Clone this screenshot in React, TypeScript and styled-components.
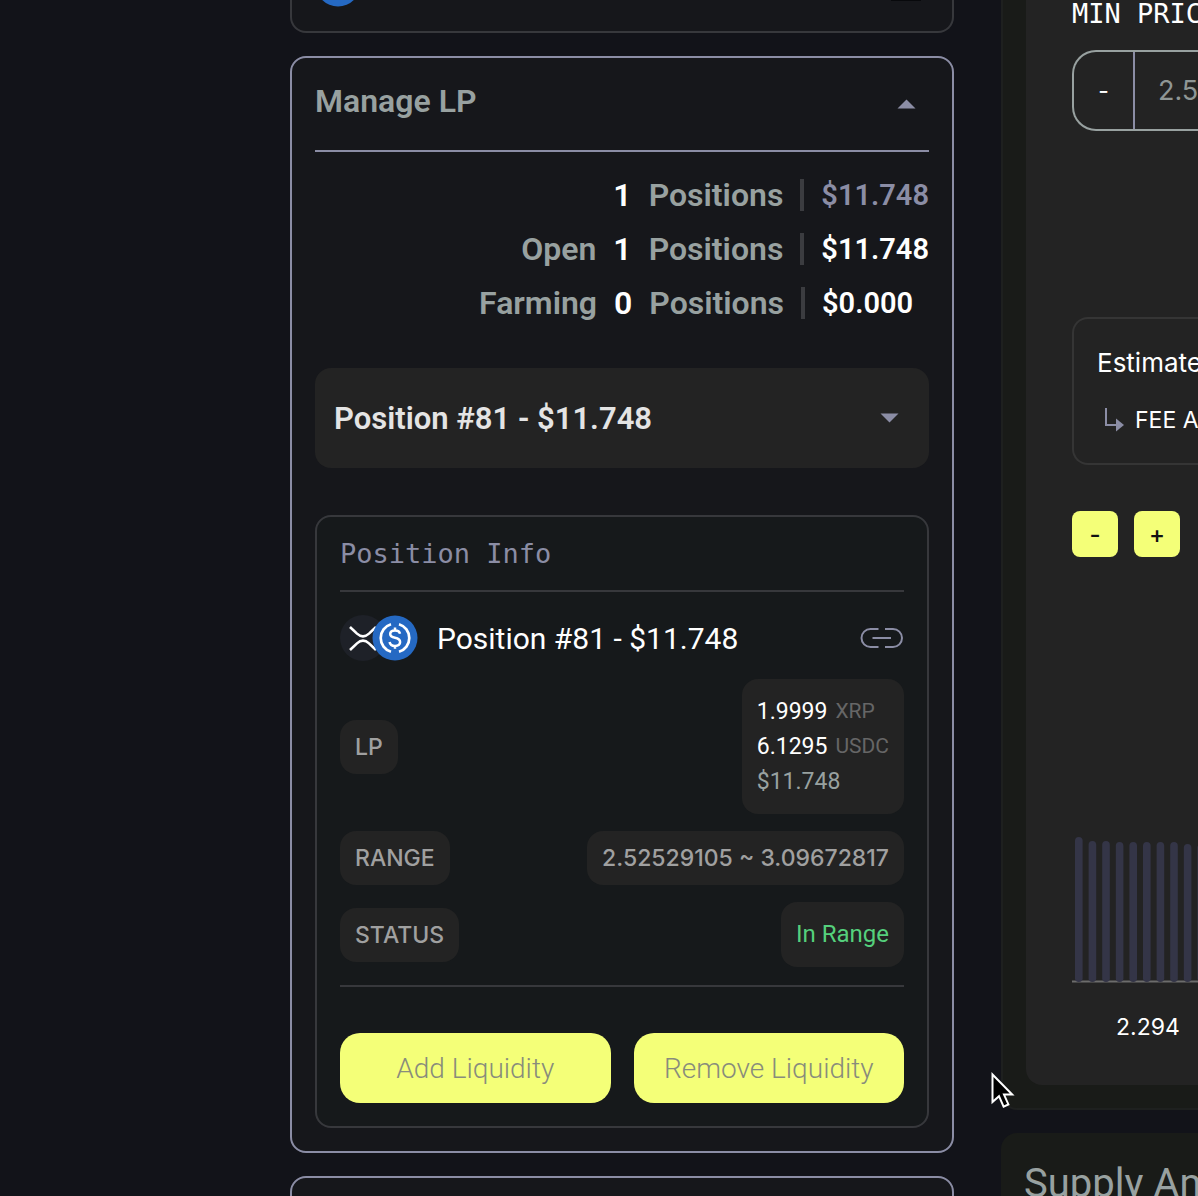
import React from "react";
import styled, { createGlobalStyle } from "styled-components";

const c = {
  page: "#121319",
  card: "#16171b",
  info: "#16191b",
  chip: "#232323",
  line: "#37383c",
  lilac: "#8b8da5",
  sage: "#98a1a0",
  lime: "#f4ff78",
};
const text = `Roboto, "Liberation Sans", sans-serif`;
const plain = `Inter, "Liberation Sans", sans-serif`;
const mono = `"DejaVu Sans Mono", "Liberation Mono", monospace`;

const GlobalStyle = createGlobalStyle`
  *, *::before, *::after { box-sizing: border-box; }
  body { margin: 0; background: ${c.page}; color: #fff; font-family: ${text}; }
  button, input, select { font: inherit; margin: 0; }
  h2, h3, p, ul, dl, dd { margin: 0; padding: 0; }
`;

const Page = styled.div`
  height: 100vh;
  overflow: hidden;
  padding-left: 290px;
  display: grid;
  grid-template-columns: minmax(0, 664fr) minmax(0, 197fr);
  column-gap: 47px;
  align-items: start;
`;

const Column = styled.main`
  display: flex;
  flex-direction: column;
  gap: 23px;
`;

const Card = styled.section<{ $quiet?: boolean }>`
  background: ${c.card};
  border: 2px solid ${(p) => (p.$quiet ? c.line : c.lilac)};
  border-radius: 16px;
  padding: 23px;
`;

const PreviousCard = styled(Card)`
  display: flex;
  justify-content: space-between;
  align-items: flex-start;
  border-top: 0;
  border-radius: 0 0 16px 16px;
  padding: 0 31px 24px 23px;
`;

const Dash = styled.span`
  width: 30px;
  height: 1px;
  background: #08090c;
`;

const CardHead = styled.header`
  display: flex;
  align-items: center;
  justify-content: space-between;
  padding-bottom: 29px;
  border-bottom: 2px solid ${c.lilac};
`;

const CardTitle = styled.h2`
  font-size: 32px;
  line-height: 40px;
  font-weight: 600;
  color: ${c.sage};
`;

const Toggle = styled.button`
  display: flex;
  padding: 18px 13px 12px;
  border: 0;
  background: none;
  color: ${c.lilac};
`;

const Stats = styled.ul`
  list-style: none;
  margin: 16px 0 38px;
`;

const Stat = styled.li`
  display: flex;
  align-items: center;
  justify-content: flex-end;
  gap: 17px;
  height: 54px;
  font-size: 32px;
  font-weight: 600;
  color: ${c.sage};
`;

const Count = styled.span`
  color: #fff;
`;

const Bar = styled.span`
  width: 4px;
  height: 32px;
  background: #3b3c40;
`;

const Amount = styled.span<{ $dim?: boolean }>`
  min-width: 107px;
  font-size: 29px;
  color: ${(p) => (p.$dim ? c.lilac : "#fff")};
`;

const SelectBox = styled.label`
  display: grid;
  align-items: center;
  margin-bottom: 47px;
  color: ${c.lilac};
  & > * { grid-area: 1 / 1; }
  & > svg { justify-self: end; margin-right: 30px; pointer-events: none; }
`;

const Select = styled.select`
  appearance: none;
  width: 100%;
  height: 100px;
  padding: 0 19px;
  border: 0;
  border-radius: 16px;
  background: ${c.chip};
  color: #e4e4e4;
  font-size: 31px;
  font-weight: 600;
`;

const Info = styled.section`
  background: ${c.info};
  border: 2px solid ${c.line};
  border-radius: 16px;
  padding: 23px;
`;

const InfoTitle = styled.h3`
  padding: 0 0 22px;
  border-bottom: 2px solid ${c.line};
  font-family: ${mono};
  font-size: 27px;
  line-height: 28px;
  font-weight: 400;
  color: ${c.lilac};
`;

const Position = styled.div`
  display: flex;
  align-items: center;
  height: 46px;
  margin: 23px 0 18px;
`;

const Tokens = styled.span`
  display: flex;
  & > svg + svg { margin-left: -14px; }
`;

const Name = styled.p`
  flex: 1;
  margin-left: 19px;
  font-size: 30px;
`;

const LinkButton = styled.a`
  display: flex;
  color: ${c.lilac};
`;

const Rows = styled.dl`
  display: flex;
  flex-direction: column;
  gap: 17px;
  padding-bottom: 18px;
  border-bottom: 2px solid ${c.line};
`;

const Row = styled.div`
  display: flex;
  align-items: center;
  justify-content: space-between;
`;

const Chip = styled.dt`
  padding: 15px;
  border-radius: 16px;
  background: ${c.chip};
  color: #a0a0a0;
  font-family: ${plain};
  font-size: 23px;
  line-height: 24px;
  font-weight: 500;
`;

const Value = styled.dd<{ $good?: boolean }>`
  padding: 15px;
  border-radius: 16px;
  background: ${c.chip};
  color: ${(p) => (p.$good ? "#55d07c" : "#fff")};
  font-size: 24px;
  line-height: 35px;
`;

const Holding = styled.p<{ $dim?: boolean }>`
  display: flex;
  gap: 8px;
  font-size: 23px;
  color: ${(p) => (p.$dim ? c.sage : "#fff")};
`;

const Unit = styled.span`
  font-size: 21px;
  color: #666;
`;

const Actions = styled.div`
  display: grid;
  grid-template-columns: 1fr 1fr;
  gap: 23px;
  margin-top: 46px;
`;

const Action = styled.button`
  height: 70px;
  border: 0;
  border-radius: 20px;
  background: ${c.lime};
  color: #888c7c;
  font-size: 28px;
  font-weight: 300;
`;

const NextCard = styled(Card)`
  height: 80px;
`;

const Side = styled.aside`
  display: flex;
  flex-direction: column;
  gap: 23px;
  white-space: nowrap;
`;

const Panel = styled.section`
  border: 2px solid #1e201f;
  border-width: 0 0 2px 2px;
  border-radius: 0 0 0 16px;
  background: #191b18;
  padding: 0 0 23px 23px;
`;

const Inner = styled.div`
  overflow: hidden;
  padding: 0 0 42px 46px;
  border-radius: 0 0 0 16px;
  background: #232323;
`;

const PriceLabel = styled.label`
  display: block;
  padding-bottom: 22px;
  font-family: ${mono};
  font-size: 27px;
  line-height: 28px;
`;

const Stepper = styled.div`
  display: flex;
  height: 81px;
  margin-bottom: 186px;
  border: 2px solid ${c.sage};
  border-right: 0;
  border-radius: 24px 0 0 24px;
`;

const StepButton = styled.button`
  width: 61px;
  flex: none;
  border: 0;
  border-right: 2px solid ${c.lilac};
  background: none;
  color: #fff;
  font-family: ${plain};
  font-size: 23px;
`;

const PriceInput = styled.input`
  min-width: 0;
  flex: 1;
  padding: 0 0 0 23px;
  border: 0;
  background: none;
  color: #8f9695;
  font-family: ${plain};
  font-size: 27px;
`;

const Estimate = styled.div`
  display: flex;
  flex-direction: column;
  gap: 24px;
  padding: 27px 0 27px 23px;
  height: 148px;
  border: 2px solid #353535;
  border-right: 0;
  border-radius: 16px 0 0 16px;
  font-family: ${plain};
  overflow: hidden;
`;

const EstimateTitle = styled.p`
  font-size: 26px;
  line-height: 34px;
`;

const Fee = styled.p`
  display: flex;
  align-items: center;
  gap: 10px;
  padding-left: 7px;
  font-size: 23px;
  line-height: 32px;
  & > svg { flex: none; }
`;

const Zoom = styled.div`
  display: flex;
  gap: 16px;
  margin: 46px 0 279px;
`;

const ZoomButton = styled.button`
  width: 46px;
  height: 46px;
  flex: none;
  padding: 0;
  border: 0;
  border-radius: 8px;
  background: ${c.lime};
  color: #111;
  font-family: ${plain};
  font-size: 24px;
  font-weight: 500;
`;

const Chart = styled.svg`
  display: block;
`;

const Tick = styled.p`
  padding: 29px 0 0 44px;
  font-family: ${plain};
  font-size: 23px;
  line-height: 31px;
`;

const Supply = styled.section`
  overflow: hidden;
  padding: 28px 0 20px 23px;
  border-radius: 16px 0 0 0;
  background: #191b18;
  color: ${c.sage};
`;

const SupplyTitle = styled.h2`
  font-size: 40px;
  line-height: 46px;
  font-weight: 400;
`;

const Pointer = styled.svg`
  position: absolute;
  left: 990px;
  top: 1071px;
`;

const Caret = ({ up }: { up?: boolean }) => (
  <svg width="19" height="10" viewBox="0 0 19 10" aria-hidden="true">
    <path d={up ? "M0.5 9.5L9.5 0.5L18.5 9.5Z" : "M0.5 0.5L9.5 9.5L18.5 0.5Z"} fill="currentColor" />
  </svg>
);

const Xrp = () => (
  <svg width="46" height="46" viewBox="0 0 46 46" fill="none" aria-hidden="true">
    <circle cx="23" cy="23" r="23" fill="#1e2128" />
    <path d="M10 12L17 18.6Q23 24 29 18.6L36 12M10 35L17 28.4Q23 23 29 28.4L36 35" stroke="#fff" strokeWidth="2.6" />
  </svg>
);

const Usdc = () => (
  <svg width="46" height="46" viewBox="0 0 46 46" fill="none" stroke="#fff" aria-hidden="true">
    <circle cx="23" cy="23" r="22.5" fill="#2569c3" stroke="none" />
    <path d="M19 9.2A14.4 14.4 0 0 0 19 36.8M27 9.2A14.4 14.4 0 0 1 27 36.8" strokeWidth="2.7" />
    <path d="M28 18.8C27.6 16.4 25.8 15.4 23 15.4C20 15.4 18.2 16.9 18.2 19.1C18.2 21.6 20.3 22.3 23 22.8C26.2 23.4 28.1 24.4 28.1 27C28.1 29.5 26 30.9 23 30.9C19.8 30.9 18 29.5 17.6 27M23 12.5V15.6M23 30.6V33.7" strokeWidth="2.5" />
  </svg>
);

const bars = [145, 141, 141, 140, 140, 140, 140, 140, 138, 138];

const stats = [
  { label: "", count: 1, amount: "$11.748", dim: true },
  { label: "Open", count: 1, amount: "$11.748" },
  { label: "Farming", count: 0, amount: "$0.000" },
];

export default function App() {
  return (
    <>
      <GlobalStyle />
      <Page>
        <Column>
          <PreviousCard $quiet>
            <svg width="46" height="7" viewBox="0 39 46 7" aria-hidden="true">
              <circle cx="23" cy="23" r="22.5" fill="#2569c3" />
            </svg>
            <Dash />
          </PreviousCard>

          <Card>
            <CardHead>
              <CardTitle>Manage LP</CardTitle>
              <Toggle type="button" aria-label="Collapse Manage LP">
                <Caret up />
              </Toggle>
            </CardHead>
            <Stats>
              {stats.map((s, i) => (
                <Stat key={i}>
                  {s.label && <span>{s.label}</span>}
                  <Count>{s.count}</Count>
                  <span>Positions</span>
                  <Bar />
                  <Amount $dim={s.dim}>{s.amount}</Amount>
                </Stat>
              ))}
            </Stats>
            <SelectBox>
              <Select aria-label="Position">
                <option>Position #81 - $11.748</option>
              </Select>
              <Caret />
            </SelectBox>
            <Info>
              <InfoTitle>Position Info</InfoTitle>
              <Position>
                <Tokens>
                  <Xrp />
                  <Usdc />
                </Tokens>
                <Name>Position #81 - $11.748</Name>
                <LinkButton href="#position-81" aria-label="Open position link">
                  <svg width="44" height="22" viewBox="0 0 44 22" fill="none" stroke="currentColor" strokeWidth="2" aria-hidden="true">
                    <path d="M18.5 2H10.5A9 9 0 0 0 10.5 20H18.5M25 2H33A9 9 0 0 1 33 20H25M12.5 11H31" />
                  </svg>
                </LinkButton>
              </Position>
              <Rows>
                <Row>
                  <Chip>LP</Chip>
                  <Value>
                    <Holding>1.9999 <Unit>XRP</Unit></Holding>
                    <Holding>6.1295 <Unit>USDC</Unit></Holding>
                    <Holding $dim>$11.748</Holding>
                  </Value>
                </Row>
                <Row>
                  <Chip>RANGE</Chip>
                  <Chip as="dd">2.52529105 ~ 3.09672817</Chip>
                </Row>
                <Row>
                  <Chip>STATUS</Chip>
                  <Value $good>In Range</Value>
                </Row>
              </Rows>
              <Actions>
                <Action type="button">Add Liquidity</Action>
                <Action type="button">Remove Liquidity</Action>
              </Actions>
            </Info>
          </Card>

          <NextCard />
        </Column>

        <Side>
          <Panel>
            <Inner>
              <PriceLabel htmlFor="min-price">MIN PRICE</PriceLabel>
              <Stepper>
                <StepButton type="button" aria-label="Decrease minimum price">-</StepButton>
                <PriceInput id="min-price" defaultValue="2.52529105" />
              </Stepper>
              <Estimate>
                <EstimateTitle>Estimated</EstimateTitle>
                <Fee>
                  <svg width="21" height="26" viewBox="0 0 21 26" fill="none" aria-hidden="true">
                    <path d="M2 1V18H13" stroke={c.lilac} strokeWidth="2" />
                    <path d="M12 11.5L20 18L12 24.5Z" fill={c.lilac} />
                  </svg>
                  FEE APR
                </Fee>
              </Estimate>
              <Zoom>
                <ZoomButton type="button" aria-label="Zoom out">-</ZoomButton>
                <ZoomButton type="button" aria-label="Zoom in">+</ZoomButton>
              </Zoom>
              <Chart width="140" height="147" viewBox="0 0 140 147" aria-hidden="true">
                <path d="M0 145.5H140" stroke="#6c6c6c" strokeWidth="2" />
                {bars.map((h, i) => (
                  <rect key={i} x={3 + i * 13.6} y={146 - h} width="7.6" height={h} rx="3.8" fill="#343547" />
                ))}
              </Chart>
              <Tick>2.294</Tick>
            </Inner>
          </Panel>
          <Supply>
            <SupplyTitle>Supply Amount</SupplyTitle>
          </Supply>
        </Side>
      </Page>
      <Pointer width="26" height="40" viewBox="0 0 26 40" aria-hidden="true">
        <path d="M2.5 3.5V31L9 25.2L13.6 35.6L18.4 33.4L14 23.6H22.2Z" fill="#000" stroke="#fff" strokeWidth="2" />
      </Pointer>
    </>
  );
}
